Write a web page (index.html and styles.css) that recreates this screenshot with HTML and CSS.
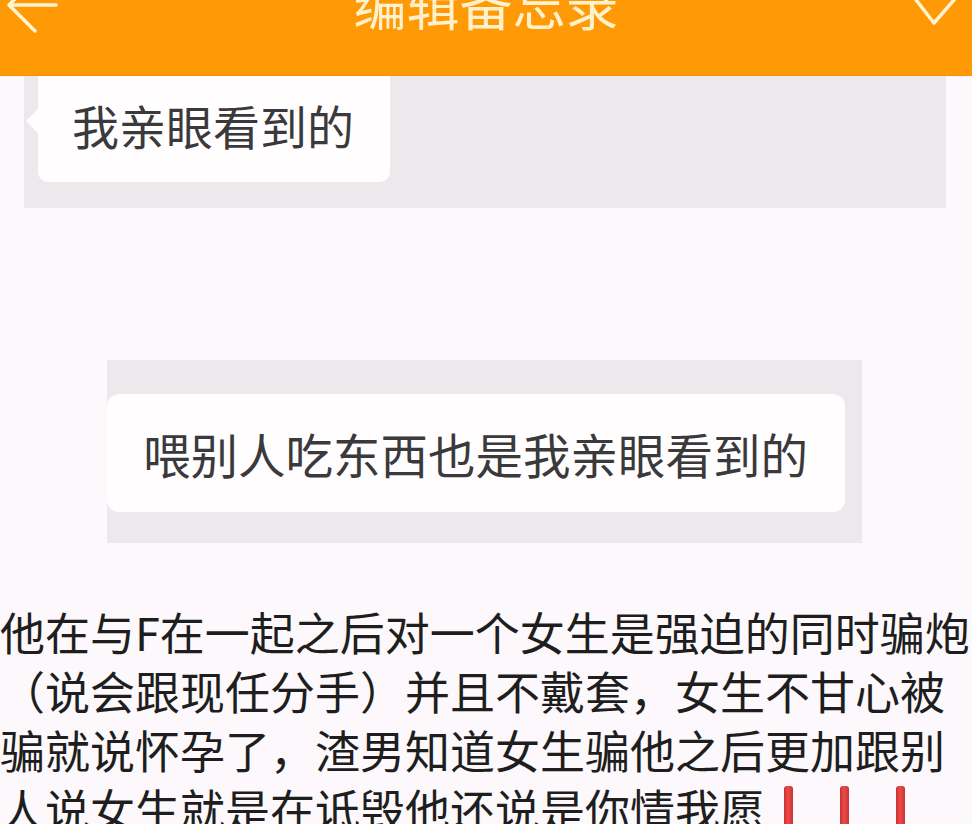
FILE: index.html
```html
<!DOCTYPE html>
<html lang="zh-CN">
<head>
    <meta charset="UTF-8">
    <meta name="viewport" content="width=device-width, initial-scale=1.0">
    <title>编辑备忘录</title>
    <link rel="stylesheet" href="styles.css">
</head>
<body>

    <!-- Top bar -->
    <header class="topbar">
        <svg class="topbar-icon" width="60" height="76" viewBox="0 0 60 76" aria-label="返回">
            <path d="M56 5 H9 M9 5 L35 31 M9 5 L35 -21" />
        </svg>
        <h1 class="topbar-title">编辑备忘录</h1>
        <svg class="topbar-icon" width="60" height="76" viewBox="0 0 60 76" aria-label="完成">
            <path d="M1 -4 L22 23 L48 -7" />
        </svg>
    </header>

    <!-- Memo body -->
    <main class="memo">
        <div class="shot shot-first">
            <div class="bubble bubble-tail">我亲眼看到的</div>
        </div>

        <div class="shot shot-second">
            <div class="bubble bubble-wide">喂别人吃东西也是我亲眼看到的</div>
        </div>

        <p class="note">他在与F在一起之后对一个女生是强迫的同时骗炮<br>（说会跟现任分手）并且不戴套，女生不甘心被<br>骗就说怀孕了，渣男知道女生骗他之后更加跟别<br>人说女生就是在诋毁他还说是你情我愿<span class="bang"></span><span class="bang"></span><span class="bang"></span></p>
    </main>

</body>
</html>
```

FILE: styles.css
```css
body, html {
    margin: 0;
    padding: 0;
    background-color: #fcf8fb;
    font-family: "Noto Sans CJK SC", "Noto Sans", sans-serif;
    overflow: hidden;
}

/* orange title bar, scrolled so its top is cut off */
.topbar {
    display: flex;
    justify-content: space-between;
    align-items: flex-start;
    height: 76px;
    background-color: #ff9a06;
    border-bottom: 1px solid #f59209;
    box-sizing: border-box;
    overflow: hidden;
}

.topbar-icon {
    flex: none;
    overflow: visible;
}

.topbar-icon path {
    fill: none;
    stroke: #fff3d2;
    stroke-width: 3.5;
    stroke-linecap: round;
    stroke-linejoin: round;
}

.topbar-title {
    margin: -23px 0 0 0;
    font-size: 53px;
    font-weight: 400;
    line-height: 1;
    color: #fff1cc;
    letter-spacing: 0;
}

/* grey chat screenshots pasted into the memo */
.shot {
    background-color: #ebe9ec;
    box-sizing: border-box;
}

.shot-first {
    margin: 0 26px 0 24px;
    height: 132px;
    padding-left: 14px;
}

.shot-second {
    margin: 152px 0 0 107px;
    width: 755px;
    height: 183px;
    padding: 34px 17px 0 0;
}

.bubble {
    display: flex;
    align-items: center;
    background-color: #fffdfe;
    color: #3a393c;
    box-sizing: border-box;
    position: relative;
}

.bubble-tail {
    width: 352px;
    height: 106px;
    padding: 0 0 10px 34px;
    font-size: 47px;
    border-radius: 0 0 10px 10px;
}

/* little pointer on the left of the first bubble */
.bubble-tail::before {
    content: "";
    position: absolute;
    left: -12px;
    top: 33px;
    border-top: 12px solid transparent;
    border-bottom: 12px solid transparent;
    border-right: 12px solid #fffdfe;
}

.bubble-wide {
    width: 738px;
    height: 118px;
    padding-left: 36px;
    font-size: 47.5px;
    border-radius: 12px;
}

.note {
    margin: 59px 0 0 0;
    font-size: 45px;
    line-height: 59px;
    color: #1e1e1e;
    white-space: nowrap;
}

/* red exclamation marks, only their tops show */
.bang {
    display: inline-block;
    width: 56px;
    height: 59px;
    vertical-align: top;
    position: relative;
}

.bang::after {
    content: "";
    position: absolute;
    left: 19px;
    top: 7px;
    width: 9px;
    height: 60px;
    border-radius: 3px;
    background: linear-gradient(to right, #c9302f, #ec4a4a 45%, #c93131);
}
```
